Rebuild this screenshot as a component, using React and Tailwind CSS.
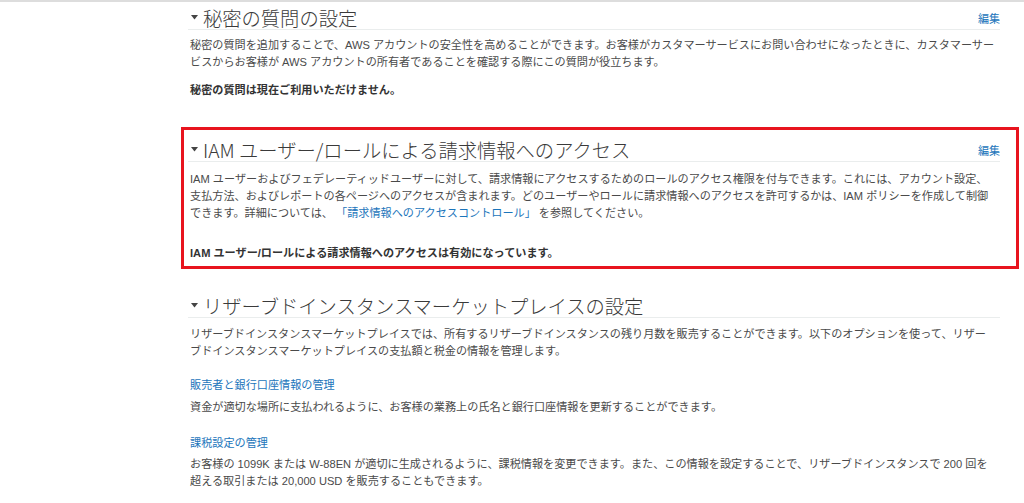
import React from "react";

const FONT = { fontFamily: '"Liberation Sans", "Noto Sans CJK JP", sans-serif' };

function Tri() {
  return (
    <svg width="7" height="5" viewBox="0 0 7 5" className="mr-[5px] shrink-0">
      <polygon points="0,0 7,0 3.5,4.5" fill="#444" />
    </svg>
  );
}

function Heading({ title, edit }) {
  return (
    <div className="flex h-[24px] items-center justify-between border-b border-[#eaeded] pl-[3px]">
      <div className="flex items-center">
        <Tri />
        <span className="font-['Noto_Sans_CJK_JP',sans-serif] text-[19.3px] font-light leading-[24px] text-[#3a3a3a] whitespace-nowrap">
          {title}
        </span>
      </div>
      {edit && (
        <a className="pt-[3px] text-[11px] leading-[17px] text-[#1b75bb]">編集</a>
      )}
    </div>
  );
}

export default function App() {
  return (
    <div
      className="h-[503px] w-[1024px] overflow-hidden border-t-2 border-[#dddddd] bg-white text-[11.13px] leading-[17px] text-[#4a4a4a] [text-spacing-trim:space-all]"
      style={FONT}
    >
      <div className="ml-[188px] w-[812px]">
        <section className="pt-[4px]">
          <Heading title="秘密の質問の設定" edit />
          <p className="mt-[7px] whitespace-nowrap pl-[2px]">
            秘密の質問を追加することで、AWS アカウントの安全性を高めることができます。お客様がカスタマーサービスにお問い合わせになったときに、カスタマーサー
            <br />
            ビスからお客様が AWS アカウントの所有者であることを確認する際にこの質問が役立ちます。
          </p>
          <p className="mt-[11px] pl-[2px] font-bold text-[#333]">秘密の質問は現在ご利用いただけません。</p>
        </section>

        <section className="-ml-[7px] -mr-[19px] mt-[28px] border-[3px] border-[#e8141e] pb-[4px] pl-[4px] pr-[16px] pt-[8px]">
          <Heading title="IAM ユーザー/ロールによる請求情報へのアクセス" edit />
          <p className="mt-[9px] whitespace-nowrap pl-[2px]">
            IAM ユーザーおよびフェデレーティッドユーザーに対して、請求情報にアクセスするためのロールのアクセス権限を付与できます。これには、アカウント設定、
            <br />
            支払方法、およびレポートの各ページへのアクセスが含まれます。どのユーザーやロールに請求情報へのアクセスを許可するかは、IAM ポリシーを作成して制御
            <br />
            できます。詳細については、 <a className="text-[#1b75bb]">「請求情報へのアクセスコントロール」</a> を参照してください。
          </p>
          <p className="mt-[23px] pl-[2px] font-bold text-[#333]">
            IAM ユーザー/ロールによる請求情報へのアクセスは有効になっています。
          </p>
        </section>

        <section className="mt-[25px]">
          <Heading title="リザーブドインスタンスマーケットプレイスの設定" />
          <p className="mt-[8px] whitespace-nowrap pl-[2px]">
            リザーブドインスタンスマーケットプレイスでは、所有するリザーブドインスタンスの残り月数を販売することができます。以下のオプションを使って、リザー
            <br />
            ブドインスタンスマーケットプレイスの支払額と税金の情報を管理します。
          </p>
          <a className="mt-[17px] block pl-[2px] text-[#1b75bb]">販売者と銀行口座情報の管理</a>
          <p className="mt-[5px] pl-[2px]">
            資金が適切な場所に支払われるように、お客様の業務上の氏名と銀行口座情報を更新することができます。
          </p>
          <a className="mt-[19px] block pl-[2px] text-[#1b75bb]">課税設定の管理</a>
          <p className="mt-[4px] whitespace-nowrap pl-[2px]">
            お客様の 1099K または W-88EN が適切に生成されるように、課税情報を変更できます。また、この情報を設定することで、リザーブドインスタンスで 200 回を
            <br />
            超える取引または 20,000 USD を販売することもできます。
          </p>
        </section>
      </div>
    </div>
  );
}
